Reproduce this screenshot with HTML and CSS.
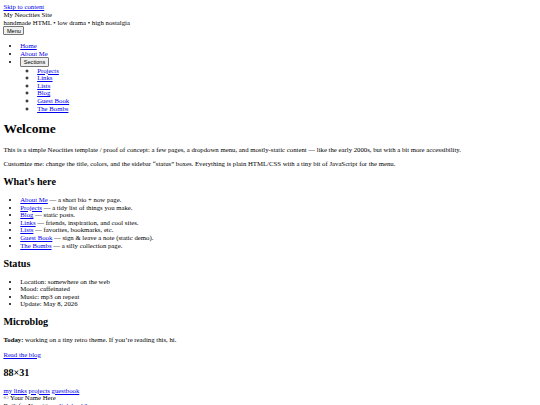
FILE: index.html
```html
<!DOCTYPE html>
<html lang="en">
<head>
<meta charset="utf-8">
<title>My Neocities Site</title>
<link rel="stylesheet" href="styles.css">
</head>
<body class="page">
<a class="skip" href="#main">Skip to content</a>
<header class="site-header">
  <div class="site-title">My Neocities Site</div>
  <div class="tagline">handmade HTML • low drama • high nostalgia</div>
  <button class="btn" type="button">Menu</button>
  <nav class="site-nav">
    <ul class="list">
      <li><a href="#">Home</a></li>
      <li><a href="#">About Me</a></li>
      <li><button class="btn" type="button">Sections</button>
        <ul class="sublist">
          <li><a href="#">Projects</a></li>
          <li><a href="#">Links</a></li>
          <li><a href="#">Lists</a></li>
          <li><a href="#">Blog</a></li>
          <li><a href="#">Guest Book</a></li>
          <li><a href="#">The Bombs</a></li>
        </ul>
      </li>
    </ul>
  </nav>
</header>
<main id="main" class="content">
  <h1 class="h1">Welcome</h1>
  <p class="para">This is a simple Neocities template / proof of concept: a few pages, a dropdown menu, and mostly-static content — like the early 2000s, but with a bit more accessibility.</p>
  <p class="para">Customize me: change the title, colors, and the sidebar “status” boxes. Everything is plain HTML/CSS with a tiny bit of JavaScript for the menu.</p>
  <h2 class="h2">What’s here</h2>
  <ul class="list">
    <li><a href="#">About Me</a> — a short bio + now page.</li>
    <li><a href="#">Projects</a> — a tidy list of things you make.</li>
    <li><a href="#">Blog</a> — static posts.</li>
    <li><a href="#">Links</a> — friends, inspiration, and cool sites.</li>
    <li><a href="#">Lists</a> — favorites, bookmarks, etc.</li>
    <li><a href="#">Guest Book</a> — sign &amp; leave a note (static demo).</li>
    <li><a href="#">The Bombs</a> — a silly collection page.</li>
  </ul>
</main>
<aside class="sidebar">
  <h2 class="h2">Status</h2>
  <ul class="list">
    <li>Location: somewhere on the web</li>
    <li>Mood: caffeinated</li>
    <li>Music: mp3 on repeat</li>
    <li>Update: May 8, 2026</li>
  </ul>
  <h2 class="h2">Microblog</h2>
  <p class="para"><strong>Today:</strong> working on a tiny retro theme. If you’re reading this, hi.</p>
  <p class="para"><a href="#">Read the blog</a></p>
  <h2 class="h2">88×31</h2>
  <div class="buttons"><a href="#">my links</a> <a href="#">projects</a> <a href="#">guestbook</a></div>
</aside>
<footer class="site-footer">
  <div>© Your Name Here</div>
  <div>Built for Neocities • <a href="#">link back?</a></div>
</footer>
</body>
</html>
```

FILE: styles.css
```css
.page {
  margin: 3.375px;
  font-family: "Liberation Serif", "Times New Roman", serif;
  font-size: 6.75px;
  line-height: 7.6px;
  color: #000;
}
.page a {
  color: #0000ee;
}
.btn {
  font-family: "Liberation Sans", Arial, sans-serif;
  font-size: 5.625px;
  line-height: 6.5px;
  padding: 0.4px 2.5px;
  margin: 0;
  border: 1px solid #767676;
  border-radius: 1px;
  background: #efefef;
  color: #000;
}
.list {
  margin: 6.75px 0;
  padding-left: 16.875px;
  list-style: disc;
}
.sublist {
  margin: 0;
  padding-left: 16.875px;
  list-style: circle;
}
.h1 {
  font-size: 13.5px;
  line-height: 15.5px;
  margin: 9.045px 0;
  font-weight: bold;
}
.h2 {
  font-size: 10.125px;
  line-height: 11.6px;
  margin: 8.4px 0;
  font-weight: bold;
}
.para {
  margin: 6.75px 0;
}
```
